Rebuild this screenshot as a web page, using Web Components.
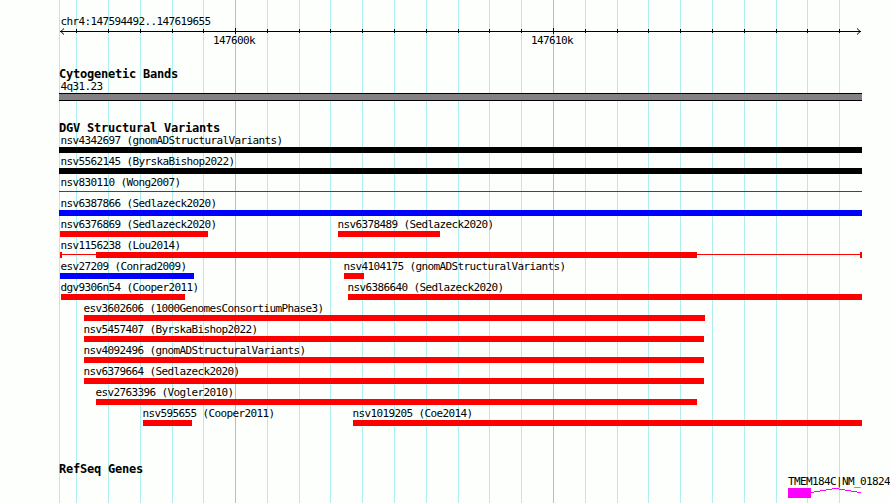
<!DOCTYPE html>
<html lang="en">
<head>
<meta charset="utf-8">
<title>chr4:147594492..147619655</title>
<style>
  body {
    margin: 0;
    background: #fdfffc;
    overflow: hidden;
  }
</style>
</head>
<body>
<genome-view>
  <scale-bar region="chr4:147594492..147619655"></scale-bar>
  <genome-track heading="Cytogenetic Bands" style="height: 54px">
    <cyto-band name="4q31.23"></cyto-band>
  </genome-track>
  <genome-track id="variants" heading="DGV Structural Variants" style="height: 341px"></genome-track>
  <genome-track heading="RefSeq Genes">
    <gene-model name="TMEM184C|NM_01824"></gene-model>
  </genome-track>
</genome-view>

<script>
// Left edge of the plotted region; every x below is in page pixels
const ORIGIN = 59;
const END = 862;
const MINOR = [76, 108, 140, 172, 203, 267, 299, 330, 362, 394, 426, 458, 489,
  521, 585, 617, 648, 680, 712, 744, 776, 807, 839];
const MAJOR = [235, 553];

// The 17px line sits in a 15px box, so the baseline lands 3px above the bar
const LABEL_FONT = `
  font: 11px/17px "DejaVu Sans Mono", monospace;
  letter-spacing: -0.622px;
  white-space: pre;
  height: 15px;
`;

class GenomeView extends HTMLElement {
  constructor() {
    super();
    this.attachShadow({ mode: 'open' });

    const lines = (list) => list.map((x) => `M${x + 0.5} 0V503`).join('');
    this.shadowRoot.innerHTML = `
      <style>
        :host {
          display: grid;
          width: 890px;
          height: 503px;
          overflow: hidden;
          color: #000;
        }
        svg, .tracks {
          grid-area: 1 / 1;
          min-width: 0;
        }
        .tracks {
          display: flex;
          flex-direction: column;
        }
      </style>
      <svg width="890" height="503" fill="none" shape-rendering="crispEdges">
        <path stroke="#afeeee" d="${lines([ORIGIN, ...MINOR])}"/>
        <path stroke="#87ceeb" d="${lines(MAJOR)}"/>
      </svg>
      <div class="tracks"><slot></slot></div>
    `;
  }
}

class ScaleBar extends HTMLElement {
  constructor() {
    super();
    this.attachShadow({ mode: 'open' });
  }

  connectedCallback() {
    const minor = MINOR.map((x) => `M${x + 0.5} 2V6`).join('');
    const major = MAJOR.map((x) => `M${x + 0.5} 1V7`).join('');
    this.shadowRoot.innerHTML = `
      <style>
        :host {
          display: flex;
          flex-direction: column;
          height: 67px;
          box-sizing: border-box;
          padding-top: 13px;
        }
        div { ${LABEL_FONT} }
        .region { height: 14px; padding-left: 60.4px; }
        svg { display: block; flex: none; }
        .ticks { display: grid; margin-top: -3px; }
        .ticks span { grid-area: 1 / 1; }
      </style>
      <div class="region">${this.getAttribute('region')}</div>
      <svg width="890" height="8" fill="none" stroke="#000">
        <path shape-rendering="crispEdges" d="M60 4.5H861${minor}${major}"/>
        <path d="M64 1.5L60.8 4.5L64 7.5M857 1.5L860.2 4.5L857 7.5"/>
      </svg>
      <div class="ticks">
        <span style="margin-left: 213px">147600k</span>
        <span style="margin-left: 531px">147610k</span>
      </div>
    `;
  }
}

class GenomeTrack extends HTMLElement {
  constructor() {
    super();
    this.attachShadow({ mode: 'open' });
  }

  connectedCallback() {
    this.shadowRoot.innerHTML = `
      <style>
        :host { display: block; flex: none; }
        h2 {
          margin: 0;
          padding-left: ${ORIGIN}px;
          height: 11px;
          font: bold 12px/15px "DejaVu Sans Mono", monospace;
          letter-spacing: -0.224px;
          white-space: pre;
        }
      </style>
      <h2>${this.getAttribute('heading')}</h2>
      <slot></slot>
    `;
  }
}

class CytoBand extends HTMLElement {
  constructor() {
    super();
    this.attachShadow({ mode: 'open' });
  }

  connectedCallback() {
    this.shadowRoot.innerHTML = `
      <style>
        :host { display: block; }
        .name { ${LABEL_FONT} padding-left: 60.4px; }
        .band {
          width: ${END - ORIGIN}px;
          height: 6px;
          margin-left: ${ORIGIN}px;
          background: #848084;
          border: solid #000;
          border-width: 1px 0;
        }
      </style>
      <div class="name">${this.getAttribute('name')}</div>
      <div class="band"></div>
    `;
  }
}

// One row of variants that do not overlap each other
class VariantLane extends HTMLElement {
  constructor() {
    super();
    this.attachShadow({ mode: 'open' });
    this.shadowRoot.innerHTML = `
      <style>
        :host { display: grid; height: 21px; }
        ::slotted(*) { grid-area: 1 / 1; }
      </style>
      <slot></slot>
    `;
  }
}

class StructuralVariant extends HTMLElement {
  constructor() {
    super();
    this.attachShadow({ mode: 'open' });
  }

  connectedCallback() {
    const start = Number(this.getAttribute('start'));
    const end = Number(this.getAttribute('end'));
    const shape = this.getAttribute('shape') || 'solid';
    const labelX = Math.max(60, start - 1) + 0.4;

    this.shadowRoot.innerHTML = `
      <style>
        :host { display: block; }
        .label { ${LABEL_FONT} margin-left: ${labelX}px; }
        .bar {
          display: flex;
          align-items: center;
          width: ${end - start}px;
          height: 6px;
          margin-left: ${start}px;
          --color: ${this.getAttribute('color') || '#f00'};
        }
        i { height: 6px; background: var(--color); }
        .solid i, .line i { flex: 1; }
        .line i, i.thin { height: 1px; align-self: flex-start; margin-top: 2px; }
      </style>
      <div class="label">${this.getAttribute('name')}</div>
      <div class="bar ${shape}">${this.body(shape)}</div>
    `;
  }

  body(shape) {
    if (shape !== 'range') return '<i></i>';
    return `<i style="width: 2px"></i><i class="thin" style="width: 34px"></i>
      <i style="width: 601px"></i><i class="thin" style="flex: 1"></i><i style="width: 2px"></i>`;
  }
}

class GeneModel extends HTMLElement {
  constructor() {
    super();
    this.attachShadow({ mode: 'open' });
  }

  connectedCallback() {
    this.shadowRoot.innerHTML = `
      <style>
        :host { display: block; padding-left: 788px; }
        .name { ${LABEL_FONT} }
        svg { display: block; }
      </style>
      <div class="name">${this.getAttribute('name')}</div>
      <svg width="74" height="10" shape-rendering="crispEdges">
        <rect width="23" height="10" fill="#f0f"/>
        <path fill="none" stroke="#f0f" d="M23 4.5H26M26 3.5H32M32 2.5H38M38 1.5H44M44 .5H51M51 1.5H57M57 2.5H63M63 3.5H69M69 4.5H73"/>
      </svg>
    `;
  }
}

customElements.define('genome-view', GenomeView);
customElements.define('scale-bar', ScaleBar);
customElements.define('genome-track', GenomeTrack);
customElements.define('cyto-band', CytoBand);
customElements.define('variant-lane', VariantLane);
customElements.define('structural-variant', StructuralVariant);
customElements.define('gene-model', GeneModel);

const lanes = [
  [['nsv4342697 (gnomADStructuralVariants)', 59, 862, '#000']],
  [['nsv5562145 (ByrskaBishop2022)', 59, 862, '#000']],
  [['nsv830110 (Wong2007)', 59, 862, '#e8000c', 'line']],
  [['nsv6387866 (Sedlazeck2020)', 59, 862, '#00f']],
  [['nsv6376869 (Sedlazeck2020)', 60, 208], ['nsv6378489 (Sedlazeck2020)', 338, 440]],
  [['nsv1156238 (Lou2014)', 60, 862, '#f00', 'range']],
  [['esv27209 (Conrad2009)', 60, 194, '#00f'], ['nsv4104175 (gnomADStructuralVariants)', 344, 364]],
  [['dgv9306n54 (Cooper2011)', 61, 185], ['nsv6386640 (Sedlazeck2020)', 348, 862]],
  [['esv3602606 (1000GenomesConsortiumPhase3)', 84, 705]],
  [['nsv5457407 (ByrskaBishop2022)', 84, 704]],
  [['nsv4092496 (gnomADStructuralVariants)', 84, 704]],
  [['nsv6379664 (Sedlazeck2020)', 84, 704]],
  [['esv2763396 (Vogler2010)', 96, 697]],
  [['nsv595655 (Cooper2011)', 143, 192], ['nsv1019205 (Coe2014)', 353, 862]]
];

const track = document.getElementById('variants');
lanes.forEach((variants) => {
  const lane = document.createElement('variant-lane');
  variants.forEach(([name, start, end, color = '#f00', shape = 'solid']) => {
    const el = document.createElement('structural-variant');
    el.setAttribute('name', name);
    el.setAttribute('start', start);
    el.setAttribute('end', end);
    el.setAttribute('color', color);
    el.setAttribute('shape', shape);
    lane.appendChild(el);
  });
  track.appendChild(lane);
});
</script>
</body>
</html>
